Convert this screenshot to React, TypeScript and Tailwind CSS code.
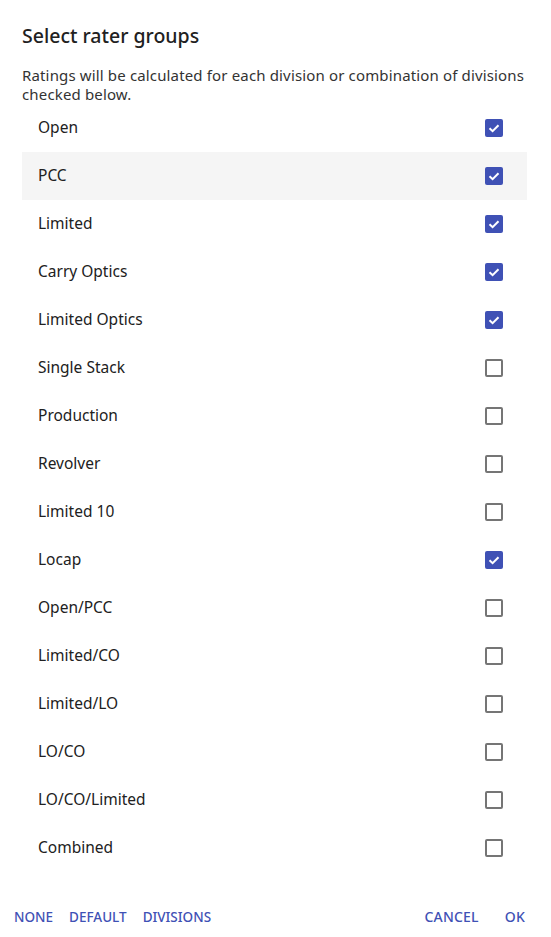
import React, { useState } from "react";

const items: [string, boolean][] = [
  ["Open", true],
  ["PCC", true],
  ["Limited", true],
  ["Carry Optics", true],
  ["Limited Optics", true],
  ["Single Stack", false],
  ["Production", false],
  ["Revolver", false],
  ["Limited 10", false],
  ["Locap", true],
  ["Open/PCC", false],
  ["Limited/CO", false],
  ["Limited/LO", false],
  ["LO/CO", false],
  ["LO/CO/Limited", false],
  ["Combined", false],
];

function Box({ checked }: { checked: boolean }) {
  if (checked) {
    return (
      <div className="w-[18px] h-[18px] bg-[#3f51b5] rounded-[2px] flex items-center justify-center">
        <svg width="14" height="14" viewBox="0 0 14 14">
          <path d="M2.5 7.2 L5.6 10.2 L11.5 4.2" stroke="white" strokeWidth="2" fill="none" />
        </svg>
      </div>
    );
  }
  return <div className="w-[18px] h-[18px] border-2 border-[#757575] rounded-[2px]" />;
}

export default function App() {
  const [state, setState] = useState(items.map((i) => i[1]));
  return (
    <div
      className="w-[551px] h-[937px] bg-white flex flex-col text-[#212121]"
      style={{ fontFamily: '"Noto Sans", sans-serif' }}
    >
      <div className="pl-[22px] pr-[24px] pt-[23px]">
        <h2 className="text-[19.5px] font-medium leading-[26px] text-[#212121]">Select rater groups</h2>
        <p className="mt-[17px] mr-[-20px] text-[15px] tracking-[0.15px] leading-[19px] text-[#333]">
          Ratings will be calculated for each division or combination of divisions
          <br />
          checked below.
        </p>
        <div className="mt-0 flex flex-col">
          {items.map(([name], i) => (
            <div
              key={name}
              onClick={() => setState((s) => s.map((v, j) => (j === i ? !v : v)))}
              className={`h-[48px] flex items-center justify-between pl-[16px] pr-[24px] ${
                i === 1 ? "bg-[#f5f5f5]" : ""
              }`}
            >
              <span className="text-[15.5px] text-[#212121]">{name}</span>
              <Box checked={state[i]} />
            </div>
          ))}
        </div>
      </div>
      <div className="pt-[37px] flex items-center justify-between pl-[14px] pr-[26px] leading-[16px]">
        <div className="flex gap-[16px] text-[13.5px] font-medium text-[#3f51b5]">
          <span>NONE</span>
          <span>DEFAULT</span>
          <span>DIVISIONS</span>
        </div>
        <div className="flex gap-[26px] text-[14px] font-medium text-[#3f51b5] tracking-[0.2px]">
          <span>CANCEL</span>
          <span>OK</span>
        </div>
      </div>
    </div>
  );
}
